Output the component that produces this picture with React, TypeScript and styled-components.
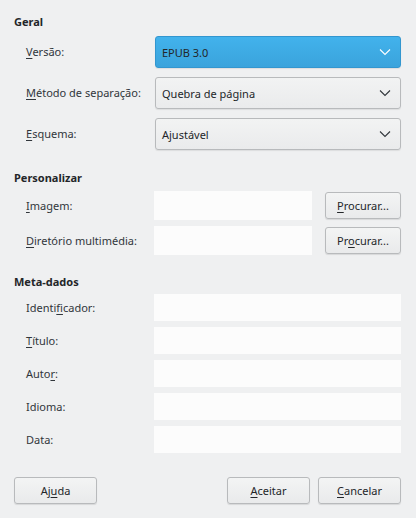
import React from 'react'
import styled, { createGlobalStyle } from 'styled-components'

const GlobalStyle = createGlobalStyle`
  html, body {
    margin: 0;
    padding: 0;
    background: #eff0f1;
  }
  body {
    font-family: 'Noto Sans', 'DejaVu Sans', sans-serif;
    font-size: 11px;
    color: #232629;
  }
`

const Dialog = styled.div`
  width: 416px;
  height: 518px;
  box-sizing: border-box;
  padding: 14px 15px 0 14px;
  display: flex;
  flex-direction: column;
`

const Heading = styled.div<{ $top?: number }>`
  font-weight: bold;
  font-size: 11px;
  line-height: 16px;
  margin-top: ${(p) => p.$top ?? 0}px;
`

const Grid = styled.div<{ $gap: number; $top: number }>`
  display: grid;
  grid-template-columns: 128px 1fr;
  row-gap: ${(p) => p.$gap}px;
  margin-top: ${(p) => p.$top}px;
  padding-left: 12px;
  align-items: center;
`

const Label = styled.label`
  font-size: 11px;
  line-height: 16px;
  white-space: nowrap;
  color: #31363b;
`

const Mn = styled.span`
  text-decoration: underline;
  text-underline-offset: 2px;
`

const Combo = styled.div<{ $active?: boolean }>`
  height: 32px;
  box-sizing: border-box;
  margin-left: 1px;
  border-radius: 3px;
  border: 1px solid ${(p) => (p.$active ? '#3296cf' : '#b8babc')};
  background: ${(p) =>
    p.$active
      ? 'linear-gradient(#42b2ec, #3aa3dc)'
      : 'linear-gradient(#f2f3f3, #eaebec)'};
  box-shadow: 0 1px 1px rgba(0, 0, 0, 0.08);
  display: flex;
  align-items: center;
  justify-content: space-between;
  padding: 0 9px 0 6px;
  color: #232629;
`

const Chevron = ({ light }: { light?: boolean }) => (
  <svg width="12" height="8" viewBox="0 0 12 8">
    <path
      d="M1 1.5 L6 6.5 L11 1.5"
      fill="none"
      stroke={light ? '#ffffff' : '#31363b'}
      strokeWidth="1.1"
    />
  </svg>
)

const FieldRow = styled.div`
  display: flex;
  align-items: center;
  gap: 13px;
`

const Field = styled.div<{ $h: number }>`
  flex: 1;
  height: ${(p) => p.$h}px;
  background: #fcfcfc;
`

const Button = styled.button<{ $w: number }>`
  width: ${(p) => p.$w}px;
  height: 27px;
  box-sizing: border-box;
  font-family: 'Noto Sans', 'DejaVu Sans', sans-serif;
  font-size: 11px;
  color: #232629;
  border: 1px solid #b8babc;
  border-radius: 3px;
  background: linear-gradient(#f3f4f4, #e9eaeb);
  box-shadow: 0 1px 1px rgba(0, 0, 0, 0.1);
  padding: 0;
`

const Footer = styled.div`
  display: flex;
  align-items: center;
  gap: 8px;
  margin-top: 24px;
`

const Spacer = styled.div`
  flex: 1;
`

export default function App() {
  return (
    <>
      <GlobalStyle />
      <Dialog>
        <Heading>Geral</Heading>
        <Grid $gap={9} $top={6}>
          <Label>
            <Mn>V</Mn>ersão:
          </Label>
          <Combo $active>
            <span>EPUB 3.0</span>
            <Chevron light />
          </Combo>
          <Label>
            <Mn>M</Mn>étodo de separação:
          </Label>
          <Combo>
            <span>Quebra de página</span>
            <Chevron />
          </Combo>
          <Label>
            <Mn>E</Mn>squema:
          </Label>
          <Combo>
            <span>Ajustável</span>
            <Chevron />
          </Combo>
        </Grid>

        <Heading $top={20}>Personalizar</Heading>
        <Grid $gap={6} $top={5}>
          <Label>
            <Mn>I</Mn>magem:
          </Label>
          <FieldRow>
            <Field $h={29} />
            <Button $w={76}>
              <Mn>P</Mn>rocurar...
            </Button>
          </FieldRow>
          <Label>
            <Mn>D</Mn>iretório multimédia:
          </Label>
          <FieldRow>
            <Field $h={29} />
            <Button $w={76}>
              Pr<Mn>o</Mn>curar...
            </Button>
          </FieldRow>
        </Grid>

        <Heading $top={19}>Meta-dados</Heading>
        <Grid $gap={6} $top={4}>
          <Label>
            Identi<Mn>fi</Mn>cador:
          </Label>
          <Field $h={27} />
          <Label>
            <Mn>T</Mn>ítulo:
          </Label>
          <Field $h={27} />
          <Label>
            Auto<Mn>r</Mn>:
          </Label>
          <Field $h={27} />
          <Label>Idioma:</Label>
          <Field $h={27} />
          <Label>Data:</Label>
          <Field $h={27} />
        </Grid>

        <Footer>
          <Button $w={83}>
            Aj<Mn>u</Mn>da
          </Button>
          <Spacer />
          <Button $w={83}>
            <Mn>A</Mn>ceitar
          </Button>
          <Button $w={83}>
            <Mn>C</Mn>ancelar
          </Button>
        </Footer>
      </Dialog>
    </>
  )
}
